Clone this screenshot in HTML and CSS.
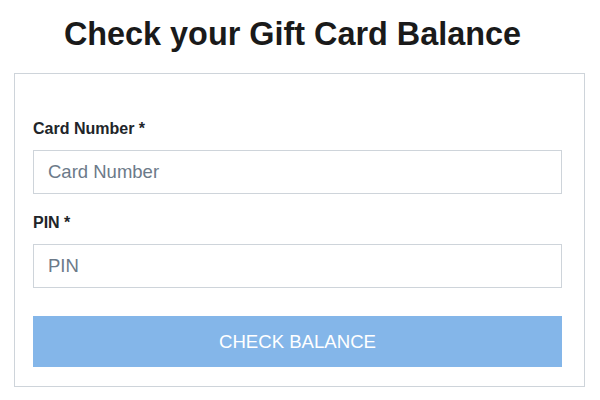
FILE: index.html
```html
<!DOCTYPE html>
<html lang="en">
<head>
    <meta charset="UTF-8">
    <meta name="viewport" content="width=device-width, initial-scale=1.0">
    <title>Check your Gift Card Balance</title>
    <link rel="stylesheet" href="styles.css">
</head>
<body>

    <h1 class="page-title">Check your Gift Card Balance</h1>

    <div class="balance-card">
        <form class="balance-form" onsubmit="return false;">
            <div class="form-group">
                <label for="cardNumber">Card Number *</label>
                <input type="text" id="cardNumber" placeholder="Card Number">
            </div>
            <div class="form-group">
                <label for="pin">PIN *</label>
                <input type="text" id="pin" placeholder="PIN">
            </div>
            <button type="submit" class="check-btn">CHECK BALANCE</button>
        </form>
    </div>

</body>
</html>
```

FILE: styles.css
```css
body {
    font-family: "Liberation Sans", Arial, sans-serif;
    background-color: #fff;
    margin: 0;
    color: #212529;
}
.page-title {
    font-size: 32.4px;
    line-height: 36px;
    font-weight: bold;
    color: #1a1a1a;
    text-align: center;
    margin: 16px 0 21px;
    padding-right: 15px;
}
.balance-card {
    margin-left: 14px;
    width: 571px;
    box-sizing: border-box;
    border: 1px solid #ced4da;
    padding: 45px 22px 19px 18px;
}
.form-group {
    margin-bottom: 19px;
}
label {
    display: block;
    font-size: 16px;
    line-height: 20px;
    font-weight: bold;
    color: #212529;
    margin-bottom: 11px;
}
input[type="text"] {
    display: block;
    width: 100%;
    height: 44px;
    box-sizing: border-box;
    padding: 0 14px;
    font-family: "Liberation Sans", Arial, sans-serif;
    font-size: 18.5px;
    color: #333;
    border: 1px solid #ced4da;
    border-radius: 0;
    margin: 0;
}
input::placeholder {
    color: #6c7a89;
}
.check-btn {
    display: block;
    width: 100%;
    height: 51px;
    margin-top: 28px;
    border: none;
    background-color: #84b6e9;
    color: #fff;
    font-family: "Liberation Sans", Arial, sans-serif;
    font-size: 18.6px;
    cursor: pointer;
}
```
